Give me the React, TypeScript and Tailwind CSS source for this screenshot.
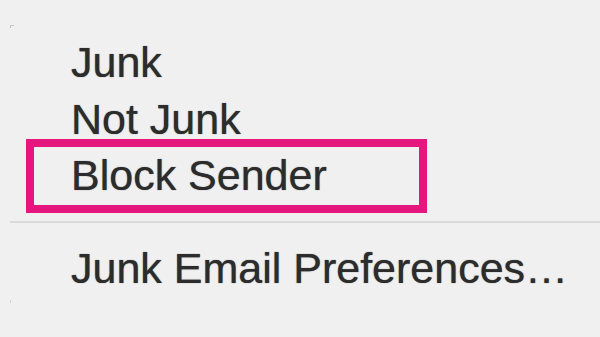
import React from "react";

const items = ["Junk", "Not Junk", "Block Sender"];

export default function App() {
  return (
    <div
      className="w-[600px] h-[337px] overflow-hidden bg-[#f0f0f0] text-[#2c2c2c] relative [text-shadow:0_0_1px_rgba(40,40,40,0.8)]"
      style={{ fontFamily: '"Liberation Sans", Arial, sans-serif' }}
    >
      {/* faint menu corner marks */}
      <div className="absolute left-[10px] top-[25px] w-[4px] h-[1px] bg-[#c8c8c8]" />
      <div className="absolute left-[10px] top-[25px] w-[1px] h-[3px] bg-[#c8c8c8]" />
      <div className="absolute left-[10px] top-[300px] w-[1px] h-[3px] bg-[#d4d4d4]" />

      <div className="flex flex-col pt-[34px]">
        {items.map((label) => (
          <div
            key={label}
            className="relative pl-[71px] text-[43px] leading-[56.5px]"
          >
            {label}
            {label === "Block Sender" && (
              <div className="absolute left-[26px] top-[-8px] w-[401px] h-[74px] border-[8px] border-[#e5177f]" />
            )}
          </div>
        ))}

        <div className="ml-[10px] mt-[17px] h-[2px] bg-[#dadada]" />

        <div className="pl-[71px] mt-[17px] text-[43px] leading-[56.5px]">
          Junk Email Preferences…
        </div>
      </div>
    </div>
  );
}
